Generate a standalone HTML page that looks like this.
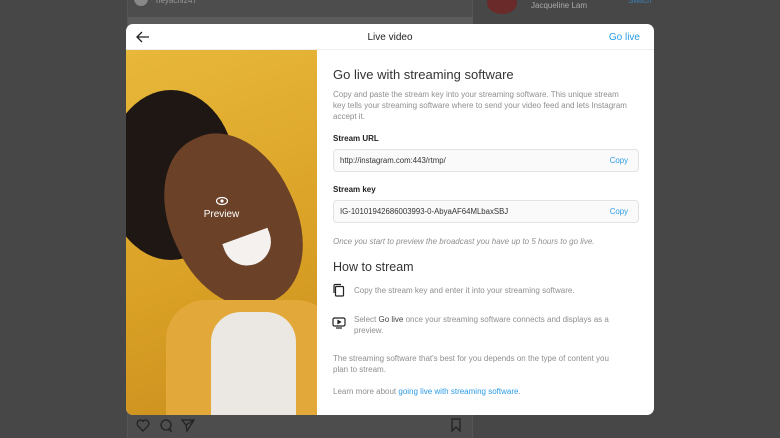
<!DOCTYPE html>
<html><head><style>
*{margin:0;padding:0;box-sizing:border-box}
body{width:780px;height:438px;background:#474747;font-family:"Liberation Sans",sans-serif;position:relative;overflow:hidden}
.card{position:absolute;left:127px;top:0;width:346px;height:438px;background:#4d4d4d;border-left:1px solid #555;border-right:1px solid #555}
.side{position:absolute;left:473px;top:0;width:307px;height:438px;background:#474747}
.modal{position:absolute;left:126px;top:24px;width:528px;height:391px;background:#fff;border-radius:7px;overflow:hidden}
.hdr{height:26px;border-bottom:1px solid #eee;position:relative;font-size:10px}
.hdr .t{position:absolute;left:0;right:0;top:8px;text-align:center;color:#222}
.hdr .g{position:absolute;right:14px;top:8px;color:#2b9be6}
.photo{position:absolute;left:0;top:26px;width:191px;height:365px;background:linear-gradient(160deg,#e8b83a,#d9a025 60%,#c98e1e);overflow:hidden}
.a{position:absolute;left:207px;color:#8f8f8f;font-size:8px;line-height:11px;white-space:nowrap}
h2{position:absolute;left:207px;font-weight:normal;color:#333;font-size:13px}
.lbl{position:absolute;left:207px;color:#222;font-weight:bold;font-size:8px}
.box{position:absolute;left:207px;width:306px;height:23px;border:1px solid #e3e3e3;border-radius:4px;background:#fafafa;color:#333;font-size:7.8px;padding:6px 6px}
.box span{position:absolute;right:10px;top:6px;color:#2b9be6}
.ic{position:absolute;left:206px}
a{color:#2b9be6;text-decoration:none}
</style></head><body>
<div class="card">
 <div style="position:absolute;left:6px;top:-8px;width:14px;height:14px;border-radius:50%;background:#888"></div>
 <div style="position:absolute;left:28px;top:-4px;color:#999;font-size:8px">heyachi247</div>
 <div style="position:absolute;left:0;top:17px;width:346px;height:8px;background:#5b5b5b"></div>
 <svg style="position:absolute;left:8px;top:418px" width="70" height="16" fill="none" stroke="#222" stroke-width="1.3"><path d="M7 13 L2 8 C0 5 2 2 5 2 C6 2 7 3 7 4 C7 3 8 2 9 2 C12 2 14 5 12 8Z"/><circle cx="30" cy="7" r="5"/><path d="M34 11l1 2-2-1"/><path d="M46 2l12 0-7 11-1-6z M50 7l8-5"/></svg>
 <svg style="position:absolute;left:322px;top:418px" width="12" height="14" fill="none" stroke="#222" stroke-width="1.3"><path d="M2 1h8v12l-4-4-4 4z"/></svg>
</div>
<div class="side">
 <div style="position:absolute;left:14px;top:-8px;width:30px;height:22px;border-radius:50%;background:#6a2a2a"></div>
 <div style="position:absolute;left:58px;top:1px;color:#aaa;font-size:8px">Jacqueline Lam</div>
 <div style="position:absolute;left:155px;top:-4px;color:#3a83b8;font-size:8px">Switch</div>
</div>
<div class="modal">
 <div class="hdr">
  <svg style="position:absolute;left:9px;top:6px" width="16" height="14" fill="none" stroke="#222" stroke-width="1.3"><path d="M14 7H2M7 2L2 7l5 5"/></svg>
  <div class="t">Live video</div><div class="g">Go live</div>
 </div>
 <div class="photo">
  <div style="position:absolute;left:-20px;top:40px;width:130px;height:170px;border-radius:50%;background:#1e1713"></div>
  <div style="position:absolute;left:45px;top:80px;width:125px;height:180px;border-radius:48%;background:#6b4128;transform:rotate(-25deg)"></div>
  <div style="position:absolute;left:100px;top:185px;width:48px;height:30px;border-radius:0 0 25px 25px;background:#f4f1ee;transform:rotate(-20deg)"></div>
  <div style="position:absolute;left:40px;top:250px;width:170px;height:140px;border-radius:40px 40px 0 0;background:#e3a83a"></div>
  <div style="position:absolute;left:85px;top:262px;width:85px;height:120px;background:#ebe8e4;border-radius:30px 30px 0 0"></div>
  <div style="position:absolute;left:0;top:146px;width:191px;text-align:center;color:#fff;font-size:10px">
   <svg width="12" height="10" style="display:block;margin:0 auto 3px"><ellipse cx="6" cy="5" rx="5.5" ry="3.5" fill="none" stroke="#fff" stroke-width="1.2"/><circle cx="6" cy="5" r="1.6" fill="#fff"/></svg>Preview</div>
 </div>
 <h2 style="top:43px">Go live with streaming software</h2>
 <div class="a" style="top:65px">Copy and paste the stream key into your streaming software. This unique stream<br>key tells your streaming software where to send your video feed and lets Instagram<br>accept it.</div>
 <div class="lbl" style="top:110px">Stream URL</div>
 <div class="box" style="top:125px">http://instagram.com:443/rtmp/<span>Copy</span></div>
 <div class="lbl" style="top:161px">Stream key</div>
 <div class="box" style="top:176px">IG-10101942686003993-0-AbyaAF64MLbaxSBJ<span>Copy</span></div>
 <div class="a" style="top:212px;font-style:italic">Once you start to preview the broadcast you have up to 5 hours to go live.</div>
 <h2 style="top:236px;font-size:12.5px">How to stream</h2>
 <svg class="ic" style="top:259px" width="14" height="14" fill="none" stroke="#222" stroke-width="1.2"><rect x="3.5" y="3.5" width="8" height="9.5" rx="1"/><path d="M2 10V2.5a1 1 0 0 1 1-1h6"/></svg>
 <div class="a" style="top:261px;left:228px">Copy the stream key and enter it into your streaming software.</div>
 <svg class="ic" style="top:292px" width="14" height="14" fill="none" stroke="#222" stroke-width="1.2"><rect x="1" y="2" width="12" height="8" rx="1.5"/><path d="M6 4.5v3l2.5-1.5z" fill="#222"/><path d="M4 12h6"/></svg>
 <div class="a" style="top:290px;left:228px">Select <span style="color:#444">Go live</span> once your streaming software connects and displays as a<br>preview.</div>
 <div class="a" style="top:329px">The streaming software that's best for you depends on the type of content you<br>plan to stream.</div>
 <div class="a" style="top:362px">Learn more about <a>going live with streaming software</a>.</div>
</div>
</body></html>
